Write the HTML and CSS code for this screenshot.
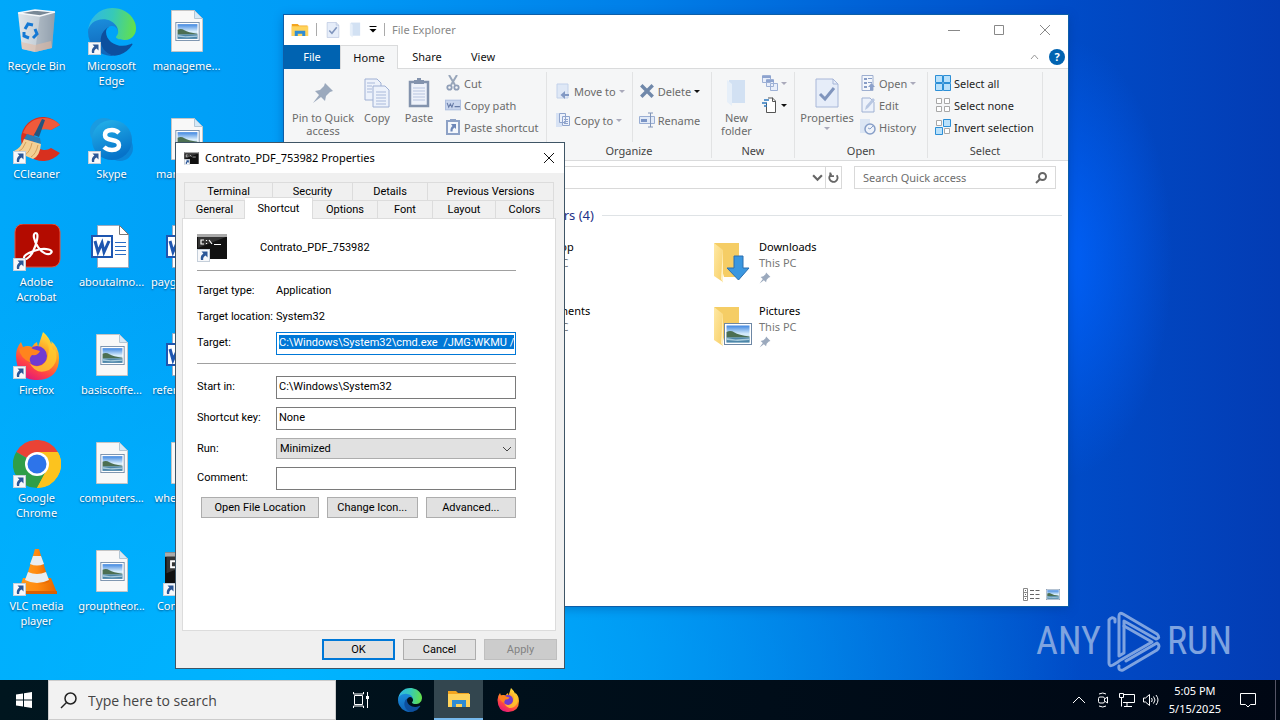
FILE: index.html
```html
<!DOCTYPE html>
<html lang="en">
<head>
<meta charset="utf-8">
<meta name="viewport" content="width=device-width, initial-scale=1">
<title>Desktop</title>
<link rel="stylesheet" href="styles.css">
</head>
<body>
<svg class="defs" aria-hidden="true">
  <defs>
    <linearGradient id="edgeGreen" x1="0" y1="0.3" x2="1" y2="0.4"><stop offset="0" stop-color="#2fb6ea"/><stop offset="0.5" stop-color="#36c9b8"/><stop offset="1" stop-color="#63e04c"/></linearGradient>
    <linearGradient id="edgeBlue" x1="0.3" y1="0" x2="0.4" y2="1"><stop offset="0" stop-color="#1b8fdd"/><stop offset="1" stop-color="#0f64b8"/></linearGradient>
    <linearGradient id="sky" x1="0" y1="0" x2="0" y2="1"><stop offset="0" stop-color="#3f86e0"/><stop offset="0.5" stop-color="#d8edfb"/><stop offset="1" stop-color="#9cc4dd"/></linearGradient>
    <linearGradient id="fire" x1="0.8" y1="0" x2="0.3" y2="1"><stop offset="0" stop-color="#fff04a"/><stop offset="0.4" stop-color="#ff9a1f"/><stop offset="0.75" stop-color="#ff4147"/><stop offset="1" stop-color="#e0187a"/></linearGradient>
    <linearGradient id="skypeFill" x1="0" y1="0" x2="0.4" y2="1"><stop offset="0" stop-color="#25b5ec"/><stop offset="1" stop-color="#0673c9"/></linearGradient>
    <linearGradient id="folderFill" x1="0" y1="0" x2="1" y2="1"><stop offset="0" stop-color="#ffe9a4"/><stop offset="1" stop-color="#f7cf68"/></linearGradient>
    <linearGradient id="cone" x1="0" x2="1" y1="0" y2="0"><stop offset="0" stop-color="#ff9a1c"/><stop offset="0.5" stop-color="#ff8a10"/><stop offset="1" stop-color="#e46400"/></linearGradient>
    <linearGradient id="binFill" x1="0" x2="1" y1="0" y2="0"><stop offset="0" stop-color="#dfe5ea"/><stop offset="0.55" stop-color="#c4ced7"/><stop offset="1" stop-color="#8b9aa8"/></linearGradient>
  </defs>
  <symbol id="i-arrow" viewBox="0 0 13 13"><rect x="0.5" y="0.5" width="12" height="12" fill="#f7f8fa" stroke="#c5cfda"/><path d="M4.5 2.500h6v6L8.600 6.600C6.700 7.700 6 9 6.200 11H4C3.300 8 4.200 6 6.400 4.500z" fill="#2b5797"/></symbol>
  <symbol id="i-photo" viewBox="0 0 28 22"><rect x="0.5" y="0.5" width="27" height="21" fill="#fff" stroke="#6d87a5"/><rect x="2.500" y="2.500" width="23" height="17" fill="url(#sky)"/><path d="M2.500 9q4-2 8 0.500t15 4v1h-23z" fill="#4c6f52"/><path d="M2.500 14.500h23v5h-23z" fill="#4d86a8"/><path d="M2.500 15l9 1.500 14-1v1.500l-12 1-11-1z" fill="#a9cbdc"/></symbol>
  <symbol id="i-bin" viewBox="0 0 48 48"><path d="M5 5l17-3 20 2-3 36-17 4-13-3z" fill="url(#binFill)"/><path d="M5 5l17-3 20 2-15 4z" fill="#788896"/><path d="M27 8l-5 36 17-4 3-36z" fill="#97a4b0" opacity="0.55"/><path d="M5 5l22 3 15-4M5 5l17-3 20 2" fill="none" stroke="#f4f7fa" stroke-width="1.500"/><path d="M9 41l13 3 17-4-1-7-16 4-14-3z" fill="#e6b9a0" opacity="0.55"/><g fill="none" stroke="#1478d4" stroke-width="3"><path d="M12 21l3-5 5 1"/><path d="M22 21l2 5-4 4"/><path d="M16 30l-5-2v-4"/></g></symbol>
  <symbol id="i-edge" viewBox="0 0 256 256"><path d="M231 190.500c-3.400 1.800-6.900 3.400-10.500 4.700a102 102 0 0 1-35.900 6.500c-47.300 0-88.500-32.500-88.500-74.300a31.500 31.500 0 0 1 16.400-27.300c-42.800 1.800-53.800 46.400-53.800 72.500 0 73.900 68.100 81.400 82.800 81.400 7.900 0 19.800-2.300 27-4.600l1.300-.4a128 128 0 0 0 66.600-52.800 4 4 0 0 0-5.400-5.700z" fill="#0d4f9e"/><path d="M105.700 241.400a79 79 0 0 1-22.700-21.300 80.700 80.700 0 0 1 29.500-120c3.200-1.500 8.500-4.100 15.600-4a32.400 32.400 0 0 1 25.700 13 31.900 31.900 0 0 1 6.300 18.700c0-.2 24.500-79.600-80-79.600-43.900 0-80 41.700-80 78.200a130 130 0 0 0 12.100 56 128 128 0 0 0 156.400 67 75.500 75.500 0 0 1-62.800-8z" fill="url(#edgeBlue)"/><path d="M152.300 148.900c-.8 1-3.300 2.500-3.300 5.700 0 2.600 1.700 5.200 4.800 7.300 14.500 10.200 42 8.800 42.100 8.800a60 60 0 0 0 30.600-8.500A62 62 0 0 0 256 109c.3-22.500-8-37.400-11.300-44C224.400 23.600 178.600 0 128.800 0A128 128 0 0 0 .8 126.200c.5-36.500 36.800-66 80-66 3.500 0 23.500.3 42 10.100 16.300 8.600 24.900 19 30.800 29.300 6.100 10.700 7.200 24.200 7.200 29.500s-2.700 13.400-8.500 19.800z" fill="url(#edgeGreen)"/></symbol>
  <symbol id="i-ccleaner" viewBox="0 0 48 48"><path d="M47 9A22 22 0 1 0 47 37L38 32A11 11 0 1 1 38 14z" fill="#d8301f"/><path d="M47 9A22 22 0 0 0 10 17l10 3q4-9 18-6z" fill="#ee5a3b"/><path d="M29 3l3 1-6 17-5-2z" fill="#24557f"/><path d="M14 18l13 4 1 6-17-5z" fill="#2b7cb5"/><path d="M11 23l17 5q-1 12-8 15L1 35q7-3 10-12z" fill="#f3cf94"/><path d="M13 26q-3 8-8 10M19 27q-2 9-7 12M25 29q-2 9-7 12" stroke="#d59e58" fill="none"/></symbol>
  <symbol id="i-skype" viewBox="0 0 48 48"><circle cx="16" cy="16" r="14" fill="#1a9be0"/><circle cx="32" cy="32" r="13" fill="#0b86d8"/><circle cx="24" cy="24" r="20" fill="url(#skypeFill)"/><path d="M31 17q-3-3-7-3-7 0-7 5 0 4 7 5t7 5q0 5-7 5-5 0-8-3" fill="none" stroke="#fff" stroke-width="4.500"/></symbol>
  <symbol id="i-acrobat" viewBox="0 0 48 48"><rect x="2" y="0" width="45" height="43" rx="8" fill="#b30b00" stroke="#e2533f"/><path d="M23 9c-4 0-2 8 2 14s10 9 13 6-5-5-12-3.500-15 5-15 8 5 2 9-6 6-18.500 3-18.500z" fill="none" stroke="#fff" stroke-width="2.200"/></symbol>
  <symbol id="i-firefox" viewBox="0 0 48 48"><path d="M3 24q0-8 5-14l2 5q5-2 9 0 2-4 5-5l1 5 5-15q7 6 8 12 1-1 0-3 8 6 8 17 0 21-21 22T3 24z" fill="url(#fire)"/><circle cx="24" cy="24" r="10" fill="#713ad0"/><path d="M6 17q9-5 14 0l7 2q-2 5-8 4-4 4-1 8-11-5-12-14z" fill="#ff841d"/><path d="M30 5q8 8 5 18-1 9-9 11-7 1-10-4 7 14 20 8 11-8 6-21-2 3-3-3-3-8-9-12z" fill="#ffcc30" opacity="0.8"/></symbol>
  <symbol id="i-chrome" viewBox="0 0 48 48"><path d="M24 24L3.200 12A24 24 0 0 1 44.800 12z" fill="#ea4335"/><path d="M24 24L44.800 12A24 24 0 0 1 24 48z" fill="#fcc31e"/><path d="M24 24l9.500 6L24 48A24 24 0 0 1 3.200 12z" fill="#2f9e48"/><path d="M24 12h20.800A24 24 0 0 1 24 48l10-18z" fill="#fcc31e"/><circle cx="24" cy="24" r="12" fill="#fff"/><circle cx="24" cy="24" r="9.500" fill="#2d74ea"/></symbol>
  <symbol id="i-vlc" viewBox="0 0 48 48"><path d="M10 30h28l6 15H5z" fill="url(#cone)"/><path d="M5 43h39v3H5z" fill="#d95f00"/><path d="M22 1h4l10 33q-12 6-24 0z" fill="url(#cone)"/><path d="M20 8h8l3 8q-7 3-14 0zM15 24q9 4 18 0l3 8q-12 6-24 0z" fill="#e9edf0"/></symbol>
  <symbol id="i-file" viewBox="0 0 32 42"><path d="M0.500 0.500h23l8 8v33h-31z" fill="#f8f8f8" stroke="#c5c5c5"/><path d="M23.500 0.500v8h8z" fill="#d4e9f8" stroke="#b4c6d4"/><use href="#i-photo" x="4" y="12" width="25" height="19"/></symbol>
  <symbol id="i-word" viewBox="0 0 40 43"><path d="M6.500 0.500h22l9 9v33h-31z" fill="#fff" stroke="#9aaac0"/><path d="M28.500 0.500v9h9z" fill="#fff" stroke="#777"/><path d="M24 17.500h11M24 21.500h11M24 25.500h11M24 29.500h11" stroke="#2b6cc4"/><rect x="1" y="11" width="20" height="21" fill="#fff" stroke="#1e56b0" stroke-width="2"/><path d="M4 16l3 11 4-9 2 9 5-11" fill="none" stroke="#1e56b0" stroke-width="3"/></symbol>
  <symbol id="i-cmd" viewBox="0 0 30 25"><rect width="30" height="25" fill="#111"/><path d="M0 0h30v3H0z" fill="#aaa"/><path d="M1 3h28L1 14z" fill="#343434"/><path d="M7 6H4v4h3M9.500 6v1M9.500 9v1M12 6l3 4M17 10.500h7" stroke="#fff" fill="none" stroke-width="1.200"/></symbol>
  <symbol id="i-folder" viewBox="0 0 40 42"><path d="M1 1h25v34H11z" fill="#f5cd65"/><path d="M1 1l9 7v32L1 34z" fill="url(#folderFill)"/><path d="M10 8v33l-2-4z" fill="#fff1c4"/></symbol>
  <symbol id="i-explorer" viewBox="0 0 24 20"><path d="M1 2h8l2 2h11v14H1z" fill="#f3a51f"/><path d="M1 5h22v13H1z" fill="#ffd35b"/><path d="M5 18v-7h14v7h-4v-3H9v3z" fill="#2f8cd4"/></symbol>
  <symbol id="i-check" viewBox="0 0 24 30"><path d="M1 1h17l5 5v23H1z" fill="#e6edf9" stroke="#a8b7d8"/><path d="M18 1v5h5" fill="none" stroke="#a8b7d8"/><path d="M5 16l5 5 9-11" fill="none" stroke="#8095bd" stroke-width="3"/></symbol>
  <symbol id="i-pin" viewBox="0 0 22 22"><path d="M13 1l8 8-3 1-4 4-1 5-4-4-8 6 6-8-4-4 5-1 4-4z" fill="#9ba9bd"/></symbol>
  <symbol id="i-copy" viewBox="0 0 26 30"><g fill="#edf2fb" stroke="#9fb0d4"><path d="M1 1h12l4 4v17H1z"/><path d="M9 8h12l4 4v17H9z"/></g><path d="M3 5h8M3 8h5M3 11h5M3 14h5M12 14h10M12 17h10M12 20h10M12 23h10M12 26h10" stroke="#a9b9da"/></symbol>
  <symbol id="i-paste" viewBox="0 0 22 30"><rect x="2" y="4" width="18" height="24" fill="#eef2fa" stroke="#8393ad" stroke-width="2.500"/><path d="M6 2h3V0h4v2h3v4H6z" fill="#8393ad"/><path d="M5 10h12M5 13h12M5 16h12M5 19h12M5 22h12" stroke="#b7c4df"/></symbol>
  <symbol id="i-cut" viewBox="0 0 14 16"><path d="M3 0l6 10M11 0L5 10" stroke="#98a6ba" stroke-width="2"/><circle cx="3.500" cy="12.500" r="2.200" fill="none" stroke="#8f9eb7" stroke-width="1.800"/><circle cx="10.500" cy="12.500" r="2.200" fill="none" stroke="#8f9eb7" stroke-width="1.800"/></symbol>
  <symbol id="i-path" viewBox="0 0 15 10"><rect x="0.500" y="0.500" width="14" height="9" fill="#c9d6ee" stroke="#aebfe0"/><path d="M2 3l1.500 4L5 4l1.500 3L8 3M9 6.500h5" fill="none" stroke="#657aa6"/></symbol>
  <symbol id="i-shortcut" viewBox="0 0 14 16"><rect x="1" y="2" width="12" height="13" fill="#f4f7fc" stroke="#8ea2c6" stroke-width="2"/><path d="M4 0h6v3H4z" fill="#8ea2c6"/><path d="M5 5h5v5L8.500 8.500Q6 10 6.500 12.500H4.500Q4 9 6.500 7z" fill="#6d87b8"/></symbol>
  <symbol id="i-move" viewBox="0 0 14 16"><path d="M1 1h11v14H1z" fill="#dfe8f6" stroke="#c2d1ea"/><path d="M13 11H9V8l-4.500 4L9 16v-3h4z" fill="#8299c4"/></symbol>
  <symbol id="i-copyto" viewBox="0 0 14 16"><path d="M0 1h6v14H0z" fill="#d7e2f4"/><path d="M3.500 1.500h6v9h-6zM6.500 4.500h7v9h-7z" fill="#edf2fb" stroke="#8fa4cc"/><path d="M8 7.500h4M8 9.500h4M8 11.500h4" stroke="#8fa4cc"/></symbol>
  <symbol id="i-delete" viewBox="0 0 14 14"><path d="M2 2l10 10M12 2L2 12" stroke="#7088aa" stroke-width="3"/></symbol>
  <symbol id="i-rename" viewBox="0 0 16 16"><path d="M0.500 4.500h11v7H0.500zM12 4.500h3.500v7H12" fill="#e2eaf7" stroke="#9aaed3"/><path d="M2 7h6v3H2z" fill="#7b95c6"/><path d="M9 1h5M9 15h5M11.500 1v14" stroke="#8094b8" fill="none"/></symbol>
  <symbol id="i-newfolder" viewBox="0 0 20 28"><path d="M3 1h16v23H3z" fill="#d2e1f3"/><path d="M1 1l5 4v22l-5-4z" fill="#e6eff9"/></symbol>
  <symbol id="i-newitem" viewBox="0 0 16 16"><g fill="#e8eefa" stroke="#9db0d5"><path d="M0.500 0.500h8v7h-8zM4.500 4.500h7v7h-7zM8.500 8.500h7v7h-7z"/></g><path d="M0 2h9M4 6h8" stroke="#8da3cf" stroke-width="2"/></symbol>
  <symbol id="i-easy" viewBox="0 0 16 16"><path d="M4.500 6v9.500h9V4l-3-3H6" fill="#fff" stroke="#555"/><path d="M10.500 0.500v4h3" fill="none" stroke="#555"/><path d="M2 3h5M0 6h5M2 9h3" stroke="#2f79be" stroke-width="1.500"/></symbol>
  <symbol id="i-open" viewBox="0 0 14 16"><path d="M1 0.500h11v15H1z" fill="#f4f7fc" stroke="#9eafd0"/><path d="M3 3h3v2H3zM3 7h3v2H3zM3 11h3v2H3z" fill="#889dc6"/><path d="M7 3.500h4M7 7.500h4" stroke="#889dc6"/><path d="M9 15v-3H7l3.500-4L14 12h-2v3z" fill="#8da1ca"/></symbol>
  <symbol id="i-edit" viewBox="0 0 14 16"><path d="M1 1h8l4 4v10H1z" fill="#edf2fb" stroke="#9fb1d3"/><path d="M4 13l1-4 7-8 2 2-7 8z" fill="#b8c7e2"/></symbol>
  <symbol id="i-history" viewBox="0 0 16 16"><path d="M0 0h10v14H0z" fill="#dce6f4"/><circle cx="10" cy="10" r="5" fill="#eff3fa" stroke="#879fc8" stroke-width="1.500"/><path d="M10 10l3-3M10 10l-2-1" fill="none" stroke="#879fc8"/></symbol>
  <symbol id="i-all" viewBox="0 0 16 16"><path d="M0.500 0.500h7v7h-7zM8.500 0.500h7v7h-7zM0.500 8.500h7v7h-7zM8.500 8.500h7v7h-7z" fill="#b9e1fb" stroke="#2c8fd6"/></symbol>
  <symbol id="i-none" viewBox="0 0 16 16"><path d="M1.500 1.500h5v5h-5zM9.500 1.500h5v5h-5zM1.500 9.500h5v5h-5zM9.500 9.500h5v5h-5z" fill="#fff" stroke="#a8a8a8"/></symbol>
  <symbol id="i-invert" viewBox="0 0 16 16"><path d="M1.500 1.500h5v5h-5zM9.500 9.500h5v5h-5z" fill="#fff" stroke="#a8a8a8"/><path d="M8.500 0.500h7v7h-7zM0.500 8.500h7v7h-7z" fill="#b9e1fb" stroke="#2c8fd6"/></symbol>
</svg>

<main class="desktop">
  <section class="icons" aria-label="Desktop icons">
    <button class="shortcut"><svg class="art"><use href="#i-bin"/></svg><span>Recycle Bin</span></button>
    <button class="shortcut"><svg class="art"><use href="#i-ccleaner"/><use href="#i-arrow" y="35" width="13" height="13"/></svg><span>CCleaner</span></button>
    <button class="shortcut"><svg class="art"><use href="#i-acrobat"/><use href="#i-arrow" y="34" width="13" height="13"/></svg><span>Adobe Acrobat</span></button>
    <button class="shortcut"><svg class="art"><use href="#i-firefox"/><use href="#i-arrow" y="34" width="13" height="13"/></svg><span>Firefox</span></button>
    <button class="shortcut"><svg class="art"><use href="#i-chrome"/><use href="#i-arrow" y="35" width="13" height="13"/></svg><span>Google Chrome</span></button>
    <button class="shortcut"><svg class="art"><use href="#i-vlc"/><use href="#i-arrow" y="35" width="13" height="13"/></svg><span>VLC media player</span></button>
    <button class="shortcut"><svg class="art"><use href="#i-edge"/><use href="#i-arrow" y="34" width="13" height="13"/></svg><span>Microsoft Edge</span></button>
    <button class="shortcut"><svg class="art"><use href="#i-skype"/><use href="#i-arrow" y="35" width="13" height="13"/></svg><span>Skype</span></button>
    <button class="shortcut"><svg class="art"><use href="#i-word" x="3" y="1" width="40" height="43"/></svg><span>aboutalmo...</span></button>
    <button class="shortcut"><svg class="art"><use href="#i-file" x="8" y="2" width="32" height="42"/></svg><span>basiscoffe...</span></button>
    <button class="shortcut"><svg class="art"><use href="#i-file" x="8" y="2" width="32" height="42"/></svg><span>computers...</span></button>
    <button class="shortcut"><svg class="art"><use href="#i-file" x="8" y="2" width="32" height="42"/></svg><span>grouptheor...</span></button>
    <button class="shortcut"><svg class="art"><use href="#i-file" x="8" y="2" width="32" height="42"/></svg><span>manageme...</span></button>
    <button class="shortcut"><svg class="art"><use href="#i-file" x="8" y="2" width="32" height="42"/></svg><span>manualfor...</span></button>
    <button class="shortcut"><svg class="art"><use href="#i-word" x="3" y="1" width="40" height="43"/></svg><span>paygrounds...</span></button>
    <button class="shortcut"><svg class="art"><use href="#i-word" x="3" y="1" width="40" height="43"/></svg><span>referencem...</span></button>
    <button class="shortcut"><svg class="art"><use href="#i-file" x="8" y="2" width="32" height="42"/></svg><span>whereverit...</span></button>
    <button class="shortcut"><svg class="art"><use href="#i-cmd" x="2" y="4" width="45" height="38"/><use href="#i-arrow" y="35" width="13" height="13"/></svg><span>Contrato_...</span></button>
  </section>

  <div class="brand" aria-label="ANY RUN">
    <span>ANY</span>
    <svg class="brand-mark" viewBox="0 0 54 61"><g fill="none" stroke="currentColor" stroke-width="3" stroke-linejoin="round" stroke-linecap="round"><path d="M8 11V8Q5 5 2 9V52Q2 56 6 54L11 51"/><path d="M12 45V5Q12 1 16 3L50 23Q54 27 49 28L17 10V42Z"/><path d="M17 15L45 31L12 50"/><path d="M12 55Q11 60 16 59L50 39Q54 35 50 32L19 50"/></g></svg>
    <span>RUN</span>
  </div>

  <section class="window explorer" aria-label="File Explorer">
    <header class="titlebar">
      <svg class="ic18"><use href="#i-explorer"/></svg><i class="bar"></i>
      <svg class="qa"><use href="#i-check"/></svg><svg class="qa faded"><use href="#i-newfolder"/></svg>
      <svg class="qa-arrow" viewBox="0 0 8 7"><path d="M0.500 0.500h7" stroke="#000"/><path d="M0.500 3h7L4 6.500z" fill="#000"/></svg><i class="bar"></i>
      <h1>File Explorer</h1>
      <button class="cap" aria-label="Minimize"><svg viewBox="0 0 12 12"><path d="M0 6.500h12"/></svg></button>
      <button class="cap" aria-label="Maximize"><svg viewBox="0 0 12 12"><path d="M1.500 1.500h9v9h-9z"/></svg></button>
      <button class="cap" aria-label="Close"><svg viewBox="0 0 12 12"><path d="M1 1l10 10M11 1L1 11"/></svg></button>
    </header>
    <nav class="tabs">
      <button class="file">File</button><button class="on">Home</button><button>Share</button><button>View</button>
      <span class="grow"></span>
      <svg class="fold" viewBox="0 0 9 6"><path d="M1 5l3.500-4L8 5" fill="none" stroke="#999"/></svg>
      <button class="help" aria-label="Help">?</button>
    </nav>
    <div class="ribbon">
      <section class="group clip">
        <div class="tools">
          <button class="big pin"><svg><use href="#i-pin" x="5" y="4" width="22" height="22"/></svg>Pin to Quick access</button>
          <button class="big copy"><svg><use href="#i-copy" x="3" width="26" height="30"/></svg>Copy</button>
          <button class="big paste"><svg><use href="#i-paste" x="5" width="22" height="30"/></svg>Paste</button>
          <div class="stack">
            <button><svg><use href="#i-cut"/></svg>Cut</button>
            <button><svg><use href="#i-path"/></svg>Copy path</button>
            <button><svg><use href="#i-shortcut"/></svg>Paste shortcut</button>
          </div>
        </div>
      </section>
      <section class="group organize">
        <div class="tools">
          <div class="stack wide">
            <button><svg><use href="#i-move"/></svg>Move to<i class="caret"></i></button>
            <button><svg><use href="#i-copyto"/></svg>Copy to<i class="caret"></i></button>
          </div>
          <div class="stack wide split">
            <button><svg><use href="#i-delete"/></svg>Delete<i class="caret dark"></i></button>
            <button><svg><use href="#i-rename"/></svg>Rename</button>
          </div>
        </div>
        <h2>Organize</h2>
      </section>
      <section class="group new">
        <div class="tools">
          <button class="big folder"><svg><use href="#i-newfolder" x="5" y="1" width="20" height="28"/></svg>New folder</button>
          <div class="stack">
            <button aria-label="New item"><svg><use href="#i-newitem"/></svg><i class="caret"></i></button>
            <button aria-label="Easy access"><svg><use href="#i-easy"/></svg><i class="caret dark"></i></button>
          </div>
        </div>
        <h2>New</h2>
      </section>
      <section class="group open">
        <div class="tools">
          <button class="big props"><svg><use href="#i-check" x="4" width="24" height="30"/></svg>Properties<i class="caret"></i></button>
          <div class="stack">
            <button><svg><use href="#i-open"/></svg>Open<i class="caret"></i></button>
            <button><svg><use href="#i-edit"/></svg>Edit</button>
            <button><svg><use href="#i-history"/></svg>History</button>
          </div>
        </div>
        <h2>Open</h2>
      </section>
      <section class="group select">
        <div class="tools">
          <div class="stack strong">
            <button><svg><use href="#i-all"/></svg>Select all</button>
            <button><svg><use href="#i-none"/></svg>Select none</button>
            <button><svg><use href="#i-invert"/></svg>Invert selection</button>
          </div>
        </div>
        <h2>Select</h2>
      </section>
    </div>
    <div class="address">
      <div class="path">
        <button aria-label="Recent locations"><svg viewBox="0 0 10 10"><path d="M1 3l4 4 4-4" /></svg></button>
        <button class="refresh" aria-label="Refresh"><svg viewBox="0 0 12 12"><path d="M9.500 3.500A4.500 4.500 0 1 1 4 2.200M2.500 0.500v4h4" /></svg></button>
      </div>
      <label class="find"><input type="text" placeholder="Search Quick access" aria-label="Search Quick access"><svg viewBox="0 0 12 12"><circle cx="7.500" cy="4.500" r="3.500"/><path d="M5 7l-4 4"/></svg></label>
    </div>
    <div class="files">
      <h2><span>Frequent folders (4)</span></h2>
      <ul>
        <li><svg class="folder-art"><use href="#i-folder"/></svg><div><b>Desktop</b><span>This PC</span><svg class="pinned"><use href="#i-pin"/></svg></div></li>
        <li><svg class="folder-art"><use href="#i-folder"/><path d="M21 14h9v12h6L25.500 38 14 26h7z" fill="#3a97e0" stroke="#2b6fb0"/></svg><div><b>Downloads</b><span>This PC</span><svg class="pinned"><use href="#i-pin"/></svg></div></li>
        <li><svg class="folder-art"><use href="#i-folder"/></svg><div><b>Documents</b><span>This PC</span><svg class="pinned"><use href="#i-pin"/></svg></div></li>
        <li><svg class="folder-art"><use href="#i-folder"/><use href="#i-photo" x="11" y="17" width="28" height="22"/></svg><div><b>Pictures</b><span>This PC</span><svg class="pinned"><use href="#i-pin"/></svg></div></li>
      </ul>
    </div>
    <footer class="status">
      <button aria-label="Details view"><svg viewBox="0 0 17 13"><path d="M0.500 0.500h4v12h-4zM0.500 4.500h4M0.500 8.500h4" fill="none" stroke="#888"/><path d="M7 2.500h4M12.500 2.500h4M7 6.500h4M12.500 6.500h4M7 10.500h4M12.500 10.500h4M2 2.500h1M2 6.500h1M2 10.500h1" stroke="#666"/></svg></button>
      <button aria-label="Large icons view"><svg><use href="#i-photo" width="14" height="13"/></svg></button>
    </footer>
  </section>

  <section class="window dialog" aria-label="Contrato_PDF_753982 Properties">
    <header>
      <svg class="dlg-ic"><use href="#i-cmd" y="1" width="15" height="12"/><use href="#i-arrow" y="8" width="6" height="6"/></svg>
      <h1>Contrato_PDF_753982 Properties</h1>
      <button aria-label="Close"><svg viewBox="0 0 12 12"><path d="M1 1l10 10M11 1L1 11" stroke="#111"/></svg></button>
    </header>
    <div class="dlg-tabs back"><button>Terminal</button><button>Security</button><button>Details</button><button>Previous Versions</button></div>
    <div class="dlg-tabs front"><button>General</button><button class="on">Shortcut</button><button>Options</button><button>Font</button><button>Layout</button><button>Colors</button></div>
    <form class="panel" onsubmit="return false">
      <div class="who"><svg><use href="#i-cmd" y="1" width="30" height="25"/><use href="#i-arrow" y="16" width="13" height="13"/></svg><span>Contrato_PDF_753982</span></div>
      <hr>
      <div class="fact"><span>Target type:</span><span>Application</span></div>
      <div class="fact"><span>Target location:</span><span>System32</span></div>
      <div class="row target"><label for="target">Target:</label><input id="target" type="text" value="C:\Windows\System32\cmd.exe&nbsp; /JMG:WKMU /"></div>
      <hr class="mid">
      <div class="row"><label for="start">Start in:</label><input id="start" type="text" value="C:\Windows\System32"></div>
      <div class="row"><label for="key">Shortcut key:</label><input id="key" type="text" value="None"></div>
      <div class="row"><label for="run">Run:</label><span class="pick"><select id="run"><option>Minimized</option></select><svg viewBox="0 0 10 6"><path d="M1 1l4 4 4-4" fill="none" stroke="#444"/></svg></span></div>
      <div class="row"><label for="comment">Comment:</label><input id="comment" type="text"></div>
      <div class="actions"><button class="btn loc">Open File Location</button><button class="btn">Change Icon...</button><button class="btn">Advanced...</button></div>
    </form>
    <footer><button class="btn ok">OK</button><button class="btn">Cancel</button><button class="btn" disabled>Apply</button></footer>
  </section>
</main>

<footer class="taskbar">
  <button class="start" aria-label="Start"><svg viewBox="0 0 16 16"><path d="M0 2.500l7-1v6H0zM8 1.300L16 0v7.500H8zM0 8.500h7v6l-7-1zM8 8.500h8V16l-8-1.300z" fill="#fff"/></svg></button>
  <label class="search"><svg viewBox="0 0 17 17"><circle cx="10.500" cy="6.500" r="5.500"/><path d="M6.500 10.500L1 16"/></svg><input type="text" placeholder="Type here to search" aria-label="Type here to search"></label>
  <button class="task" aria-label="Task view"><svg width="18" height="18" viewBox="0 0 18 18"><path d="M2.500 4.500h8v9h-8zM1.500 1v2h10V1M1.500 17v-2h10v2M15.500 1v16" fill="none" stroke="#fff"/><path d="M14 5h3v3h-3z" fill="#fff"/></svg></button>
  <button class="task" aria-label="Microsoft Edge"><svg width="24" height="24"><use href="#i-edge"/></svg></button>
  <button class="task active" aria-label="File Explorer"><svg width="24" height="20"><use href="#i-explorer"/></svg></button>
  <button class="task" aria-label="Firefox"><svg width="24" height="24"><use href="#i-firefox"/></svg></button>
  <span class="grow"></span>
  <div class="tray">
    <svg viewBox="0 0 16 16"><path d="M2 11l6-6 6 6"/></svg>
    <svg viewBox="0 0 16 16"><rect x="3.500" y="5" width="6" height="6" rx="1.500"/><path d="M9.500 7l3-2v6l-3-2M4 2q4-2 7 0M4 14q4 2 7 0"/></svg>
    <svg viewBox="0 0 16 16"><path d="M4.500 2.500h11v8H4M8 10.500v4M5 14.500h8M0.500 1.500h4v4h-4zM2.500 6v8.500"/></svg>
    <svg viewBox="0 0 16 16"><path d="M0.500 6v4h2l4 3.500V2.500L2.500 6zM8.500 6q1.500 2 0 4M10.500 4.500q3 3.500 0 7M13 3q4 5 0 10"/></svg>
  </div>
  <div class="clock"><time>5:05 PM</time><time>5/15/2025</time></div>
  <button class="note" aria-label="Notifications"><svg viewBox="0 0 16 16"><path d="M0.500 1.500h15v11h-5L8 15l-2.500-2.500h-5z" fill="none" stroke="#fff"/></svg></button>
</footer>
</body>
</html>
```
FILE: styles.css
```css
* { box-sizing: border-box; }

body {
  margin: 0;
  min-height: 100vh;
  display: flex;
  flex-direction: column;
  overflow: hidden;
  font: 11px/15px "Noto Sans", "Open Sans", sans-serif;
  color: #111;
}

button, input, select { font: inherit; color: inherit; }
button { border: 0; padding: 0; background: none; }
h1, h2, ul, hr { margin: 0; padding: 0; font: inherit; }
svg { display: block; flex: none; }
.defs { position: absolute; width: 0; height: 0; }
.grow { flex: 1; }

/* Desktop */
.desktop {
  position: relative;
  flex: 1;
  min-height: 680px;
  background:
    radial-gradient(ellipse 110px 220px at 83% 38%, #0060f8, #0060f800),
    radial-gradient(ellipse 800px 420px at 22% 100%, #00b4ff, #00b4ff00),
    linear-gradient(to right, #00a8fa 0%, #009cf7 24%, #007fe8 50%, #0061d6 68%, #004cc8 83%, #033cb4 100%);
}

.icons {
  display: grid;
  width: max-content;
  margin-left: -1px;
  grid-auto-flow: column;
  grid-template-rows: repeat(6, 108px);
  grid-auto-columns: 75px;
}
.shortcut {
  display: flex;
  flex-direction: column;
  align-items: center;
  gap: 2px;
  padding-top: 8px;
  color: #fff;
  text-align: center;
  text-shadow: 0 1px 2px #004a80;
}
.shortcut span { max-width: 72px; }
.art { width: 48px; height: 48px; }

.brand {
  position: absolute;
  right: 48px;
  bottom: 8px;
  display: flex;
  align-items: center;
  gap: 6px;
  color: #7ea3e0;
  font: 38px/62px "Roboto Condensed", "Roboto", sans-serif;
}
.brand-mark { width: 54px; height: 61px; }

.window { position: absolute; display: flex; flex-direction: column; background: #fff; }

/* File Explorer */
.explorer {
  left: 284px;
  right: 212px;
  top: 15px;
  min-width: 784px;
  min-height: 591px;
  box-shadow: 0 0 0 1px #0d5ea8, 0 2px 10px #00337766;
}
.titlebar { display: flex; align-items: center; height: 30px; padding-left: 7px; padding-bottom: 1px; color: #888; }
.titlebar h1 { flex: 1; }
.ic18 { width: 18px; height: 16px; }
.bar { width: 1px; height: 13px; margin: 0 7px; background: #aaa; }
.qa { width: 14px; height: 16px; margin-right: 8px; margin-left: 2px; }
.faded { margin-left: 0; margin-right: 7px; }
.qa-arrow { width: 8px; height: 7px; }
.cap { display: grid; place-items: center; width: 45px; height: 30px; }
.cap:last-child { width: 47px; }
.cap svg { width: 12px; height: 12px; fill: none; stroke: #888; }

.tabs { display: flex; align-items: center; height: 24px; padding-right: 3px; border-bottom: 1px solid #dadbdc; }
.tabs button { width: 56px; height: 24px; }
.tabs .file { background: #0063b1; color: #fff; }
.tabs .on { width: 58px; margin-right: 1px; background: #f5f6f7; border: solid #dadbdc; border-width: 1px 1px 0; }
.tabs .help { width: 16px; height: 16px; border-radius: 8px; background: #0063b1; color: #fff; font-weight: bold; }
.fold { width: 9px; height: 6px; margin-right: 10px; }

.ribbon { display: flex; height: 92px; background: #f5f6f7; border-bottom: 1px solid #dadbdc; color: #6b6b6b; }
.group { display: flex; flex-direction: column; justify-content: space-between; border-right: 1px solid #e2e3e4; margin: 3px 0 2px; }
.group h2 { text-align: center; color: #444; }
.clip { width: 263px; }
.organize { width: 165px; }
.new { width: 83px; }
.open { width: 133px; }
.select { width: 115px; }
.tools { display: flex; height: 70px; }
.big { display: flex; flex-direction: column; align-items: center; gap: 3px; padding-top: 6px; line-height: 13px; }
.big svg { width: 32px; height: 30px; }
.pin { width: 66px; margin-left: 6px; }
.copy { width: 42px; }
.paste { width: 42px; }
.folder { width: 37px; margin-left: 6px; }
.folder + .stack { padding-left: 7px; }
.props { width: 56px; margin-left: 4px; }
.stack { display: flex; flex-direction: column; padding-left: 5px; }
.stack button { display: flex; align-items: center; gap: 3px; height: 22px; white-space: nowrap; }
.stack svg { width: 16px; height: 16px; }
.stack.wide { padding-top: 8px; padding-left: 8px; gap: 7px; }
.stack.split { margin-left: 7px; border-left: 1px solid #e2e3e4; padding-left: 6px; }
.stack.strong { color: #1e1e1e; padding-left: 7px; }
.caret { border: 3px solid transparent; border-top-color: #aab; border-bottom: 0; }
.caret.dark { border-top-color: #111; }

.address { display: flex; gap: 12px; height: 34px; padding: 5px 12px 6px; }
.path { flex: 1; display: flex; justify-content: flex-end; border: 1px solid #d9d9d9; }
.path button { width: 16px; display: grid; place-items: center; }
.path .refresh { border-left: 1px solid #d9d9d9; }
.path svg { width: 11px; height: 11px; fill: none; stroke: #666; stroke-width: 2; }
.find { display: flex; align-items: center; width: 202px; border: 1px solid #d9d9d9; padding: 0 8px; }
.find input { flex: 1; min-width: 0; padding: 0; border: 0; outline: 0; background: none; }
.find input::placeholder { color: #6d6d6d; opacity: 1; }
.find svg { width: 12px; height: 12px; fill: none; stroke: #666; stroke-width: 2; }

.files { flex: 1; padding: 11px 6px 0 190px; }
.files h2 { display: flex; align-items: center; gap: 8px; color: #1e3287; font-size: 13px; line-height: 18px; }
.files h2::after { content: ""; flex: 1; height: 1px; background: #dfe3e6; }
.files ul { display: grid; grid-template-columns: 228px 228px; grid-auto-rows: 64px; padding: 15px 0 0 11px; list-style: none; }
.files li { display: flex; gap: 6px; line-height: 16px; }
.files b, .files span { display: block; }
.files b { font-weight: normal; color: #000; }
.files li span { color: #777; }
.folder-art { width: 40px; height: 42px; margin-top: 3px; }
.pinned { width: 12px; height: 12px; margin-top: 1px; }

.status { display: flex; justify-content: flex-end; align-items: center; gap: 6px; height: 24px; padding-right: 8px; }
.status svg { width: 17px; height: 13px; }
.status button:last-child svg { width: 14px; }

/* Properties dialog */
.dialog {
  left: 175px;
  top: 142px;
  width: 390px;
  min-height: 527px;
  padding: 0 8px 0 6px;
  border: 1px solid #3f5566;
  background: #f0f0f0;
  color: #000;
  font: 11px/14px "Roboto", "Liberation Sans", sans-serif;
}
.dialog header { display: flex; align-items: center; gap: 6px; height: 30px; margin: 0 -8px 9px -6px; padding: 0 9px 1px 8px; background: #fff; font: 11px/15px "Noto Sans", sans-serif; }
.dialog header h1 { flex: 1; }
.dlg-ic { width: 15px; height: 14px; }
.dialog header button svg { width: 12px; height: 12px; }
.dlg-tabs { display: grid; height: 18px; margin: 0 2px; }
.back { grid-template-columns: 89fr 80fr 75fr 126fr; }
.front { grid-template-columns: 61fr 68fr 65fr 55fr 63fr 58fr; }
.dlg-tabs button { padding-top: 1px; background: #f0f0f0; border: solid #dcdcdc; border-width: 1px 1px 0 0; }
.dlg-tabs button:first-child { border-left-width: 1px; }
.dlg-tabs .on { margin-top: -3px; margin-bottom: -1px; padding-bottom: 1px; background: #fff; z-index: 1; }
.panel { flex: 1; padding: 10px 39px 0 14px; border: 1px solid #dcdcdc; background: #fff; }
.panel hr { height: 1px; border: 0; background: #a0a0a0; }
.who { display: flex; align-items: center; gap: 33px; height: 41px; padding-bottom: 4px; }
.who svg { width: 30px; height: 30px; }
.panel hr + .fact { margin-top: 7px; }
.fact { display: grid; grid-template-columns: 79px 1fr; height: 26px; align-items: center; white-space: nowrap; }
.row { display: grid; grid-template-columns: 79px 1fr; margin-bottom: 8px; }
.row label { padding-top: 4px; white-space: nowrap; }
.row input { width: 100%; min-width: 0; height: 23px; border: 1px solid #7a7a7a; padding: 0 2px 2px; background: #fff; outline: 0; }
.target { padding-top: 2px; }
.target input { border-color: #0078d7; padding: 2px 1px 5px 2px; color: #fff; background: linear-gradient(#0078d7, #0078d7) content-box, #fff; }
.mid { margin: 0 0 12px; }
.pick { display: grid; align-items: center; height: 21px; }
.pick select, .pick svg { grid-area: 1 / 1; }
.pick select { width: 100%; height: 21px; appearance: none; border: 1px solid #adadad; border-radius: 0; padding: 0 3px; background: #e1e1e1; }
.pick svg { justify-self: end; width: 10px; height: 6px; margin-right: 4px; pointer-events: none; }
.btn { height: 21px; border: 1px solid #adadad; background: #e1e1e1; }
.btn:disabled { background: #ccc; border-color: #bfbfbf; color: #838383; }
.actions { display: flex; gap: 8px; padding-left: 4px; margin-top: -1px; }
.actions .btn { flex: 1; }
.actions .loc { flex: none; width: 118px; }
.dialog footer { display: flex; justify-content: flex-end; gap: 8px; height: 37px; margin-right: -1px; padding-top: 8px; }
.dialog footer .btn { width: 73px; }
.dialog footer .ok { border: 2px solid #0078d7; }

/* Taskbar */
.taskbar { position: relative; display: flex; height: 40px; background: linear-gradient(to right, #00161f, #000d19 60%, #000714); color: #fff; }
.taskbar button { display: grid; place-items: center; width: 49px; }
.taskbar .start { width: 48px; }
.start svg { width: 16px; height: 16px; }
.search { display: flex; align-items: center; gap: 11px; width: 288px; padding: 0 11px; background: #f2f2f2; border: 1px solid #ccc; color: #333; }
.search svg { width: 17px; height: 17px; fill: none; stroke: #222; stroke-width: 1.5; }
.search input { flex: 1; min-width: 0; padding: 1px 0 0; border: 0; outline: 0; background: none; font: 14px/20px "Open Sans", sans-serif; }
.search input::placeholder { color: #444; opacity: 1; }
.taskbar .active { background: #33464f; border-bottom: 2px solid #76b9ed; }
.tray { display: flex; align-items: center; gap: 8px; padding-right: 10px; }
.tray svg { width: 16px; height: 16px; fill: none; stroke: #fff; }
.clock { display: flex; flex-direction: column; align-items: center; justify-content: center; line-height: 18px; }
.taskbar .note { width: 55px; border-right: 1px solid #556; margin-right: 4px; }
.note svg { width: 16px; height: 16px; }
```
